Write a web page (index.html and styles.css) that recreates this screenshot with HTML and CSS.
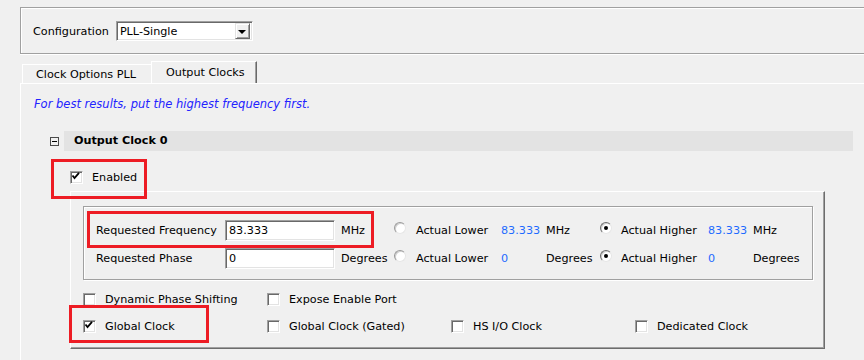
FILE: index.html
```html
<!DOCTYPE html>
<html>
<head>
<meta charset="utf-8">
<link rel="stylesheet" href="styles.css">
</head>
<body>
<div class="config">
  <span class="config-label">Configuration</span>
  <div class="select">
    <span class="select-value">PLL-Single</span>
    <span class="select-btn"><span class="arrow"></span></span>
  </div>
</div>

<div class="tabs">
  <div class="tab">Clock Options PLL</div>
  <div class="tab active">Output Clocks</div>
</div>

<div class="panel">
  <p class="hint">For best results, put the highest frequency first.</p>
  <div class="section">
    <div class="section-head">
      <span class="toggle"></span>
      <div class="section-bar">Output Clock 0</div>
    </div>
    <div class="enabled-row">
      <span class="cb checked"><svg viewBox="0 0 13 13" width="13" height="13"><path d="M2.5 4.5 L4.5 7 L9 1.8" fill="none" stroke="#000" stroke-width="1.8"/></svg></span>
      <span>Enabled</span>
    </div>
    <div class="group">
      <div class="freq-box">
        <span class="lbl">Requested Frequency</span>
        <span class="input">83.333</span>
        <span class="lbl">MHz</span>
        <span class="radio"></span>
        <span class="lbl">Actual Lower</span>
        <span class="val">83.333</span>
        <span class="lbl">MHz</span>
        <span class="radio on"></span>
        <span class="lbl">Actual Higher</span>
        <span class="val">83.333</span>
        <span class="lbl">MHz</span>

        <span class="lbl">Requested Phase</span>
        <span class="input">0</span>
        <span class="lbl">Degrees</span>
        <span class="radio"></span>
        <span class="lbl">Actual Lower</span>
        <span class="val">0</span>
        <span class="lbl">Degrees</span>
        <span class="radio on"></span>
        <span class="lbl">Actual Higher</span>
        <span class="val">0</span>
        <span class="lbl">Degrees</span>
      </div>
      <div class="options">
        <div class="opt"><span class="cb"></span><span>Dynamic Phase Shifting</span></div>
        <div class="opt"><span class="cb"></span><span>Expose Enable Port</span></div>
        <div class="opt"></div>
        <div class="opt"></div>
        <div class="opt"><span class="cb checked"><svg viewBox="0 0 13 13" width="13" height="13"><path d="M2.5 4.5 L4.5 7 L9 1.8" fill="none" stroke="#000" stroke-width="1.8"/></svg></span><span>Global Clock</span></div>
        <div class="opt"><span class="cb"></span><span>Global Clock (Gated)</span></div>
        <div class="opt"><span class="cb"></span><span>HS I/O Clock</span></div>
        <div class="opt"><span class="cb"></span><span>Dedicated Clock</span></div>
      </div>
    </div>
  </div>
</div>

<div class="mark mark-enabled"></div>
<div class="mark mark-freq"></div>
<div class="mark mark-global"></div>
</body>
</html>
```

FILE: styles.css
```css
html, body {
  margin: 0;
  padding: 0;
  overflow: hidden;
}
body {
  background: #f0f0f0;
  font-family: "DejaVu Sans", Verdana, sans-serif;
  font-size: 11.2px;
  color: #000;
  width: 864px;
  height: 360px;
  display: flex;
  flex-direction: column;
}

/* configuration box */
.config {
  margin: 7px -20px 0 20px;
  border: 1px solid #a0a0a0;
  box-shadow: inset 1px 1px 0 #fff, 0 1px 0 #fff;
  padding: 13px 0 12px 12px;
  display: flex;
  align-items: center;
  height: 20px;
  flex: none;
}
.config-label {
  margin-right: 7px;
}
.select {
  width: 137px;
  height: 20px;
  box-sizing: border-box;
  background: #fff;
  border: 1px solid;
  border-color: #a0a0a0 #fff #fff #a0a0a0;
  box-shadow: inset 1px 1px 0 #696969, inset -1px -1px 0 #e3e3e3;
  display: flex;
  align-items: center;
  justify-content: space-between;
  padding: 0 2px 0 3px;
}
.select-btn {
  width: 15px;
  height: 16px;
  box-sizing: border-box;
  background: #f0f0f0;
  border: 1px solid;
  border-color: #e3e3e3 #696969 #696969 #e3e3e3;
  box-shadow: inset 1px 1px 0 #fff, inset -1px -1px 0 #a0a0a0;
  display: flex;
  align-items: center;
  justify-content: center;
}
.arrow {
  width: 0;
  height: 0;
  border-left: 4px solid transparent;
  border-right: 4px solid transparent;
  border-top: 4px solid #000;
  margin-top: 1px;
}

/* tabs */
.tabs {
  display: flex;
  align-items: flex-end;
  margin: 7px 0 0 22px;
  height: 22px;
  flex: none;
}
.tab {
  box-sizing: border-box;
  height: 19px;
  width: 129px;
  border-top: 1px solid #fff;
  border-left: 1px solid #fff;
  padding-left: 13px;
  line-height: 19px;
}
.tab.active {
  height: 22px;
  width: 106px;
  padding-left: 14px;
  line-height: 22px;
  padding-bottom: 2px;
  border-right: 1px solid #696969;
  box-shadow: inset -1px 0 0 #a0a0a0;
}

/* panel */
.panel {
  flex: 1;
  min-height: 0;
  overflow: hidden;
  margin-left: 20px;
  border-top: 1px solid #fff;
  border-left: 1px solid #fff;
}
.hint {
  margin: 13px 0 0 13px;
  line-height: 14px;
  font-style: italic;
  font-size: 11.5px;
  color: #2323ff;
}
.section {
  margin: 20px 0 0 29px;
  width: 803px;
}
.section-head {
  display: flex;
  align-items: center;
  height: 20px;
}
.toggle {
  width: 9px;
  height: 9px;
  box-sizing: border-box;
  border: 1px solid #4a4a4a;
  margin-right: 5px;
  display: flex;
  align-items: center;
  justify-content: center;
}
.toggle::after {
  content: "";
  width: 5px;
  height: 1px;
  background: #000;
}
.section-bar {
  flex: 1;
  height: 20px;
  line-height: 20px;
  background: #e3e3e3;
  padding-left: 10px;
  font-weight: bold;
}

.enabled-row {
  display: flex;
  align-items: center;
  height: 16px;
  margin: 18px 0 0 20px;
  gap: 9px;
}

/* checkbox */
.cb {
  width: 13px;
  height: 13px;
  box-sizing: border-box;
  background: #fff;
  border: 1px solid;
  border-color: #a0a0a0 #fff #fff #a0a0a0;
  box-shadow: inset 1px 1px 0 #696969, inset -1px -1px 0 #e3e3e3;
  position: relative;
  flex: none;
}
.cb svg {
  position: absolute;
  left: -1px;
  top: -1px;
}

/* group box */
.group {
  margin: 6px 0 0 20px;
  width: 755px;
  box-sizing: border-box;
  border-top: 1px solid #fff;
  border-left: 1px solid #fff;
  border-right: 1px solid #6d6d6d;
  border-bottom: 1px solid #6d6d6d;
  box-shadow: inset -1px -1px 0 #a0a0a0;
  padding: 14px 11px 14px 12px;
}
.freq-box {
  border: 1px solid #a0a0a0;
  box-shadow: inset 1px 1px 0 #fff, 1px 1px 0 #fff;
  padding: 13px 0 11px 12px;
  display: grid;
  grid-template-columns: 129px 116px 53px 22px 85px 45px 54px 21px 87px 45px 1fr;
  grid-template-rows: 20px 20px;
  row-gap: 8px;
  align-items: center;
}
.input {
  width: 110px;
  height: 21px;
  box-sizing: border-box;
  background: #fff;
  border: 1px solid;
  border-color: #a0a0a0 #fff #fff #a0a0a0;
  box-shadow: inset 1px 1px 0 #696969, inset -1px -1px 0 #e3e3e3;
  padding-left: 3px;
  line-height: 19px;
}
.val {
  color: #1f6bff;
}
.radio {
  width: 12px;
  height: 12px;
  box-sizing: border-box;
  border-radius: 50%;
  background: #fff;
  border: 1px solid;
  border-color: #9a9a9a #e6e6e6 #e6e6e6 #9a9a9a;
  box-shadow: inset 1px 1px 0 #d0d0d0;
  margin-top: -5px;
  position: relative;
}
.radio.on {
  border-color: #6d6d6d #e6e6e6 #e6e6e6 #6d6d6d;
}
.radio.on::after {
  content: "";
  position: absolute;
  left: 3px;
  top: 3px;
  width: 4px;
  height: 4px;
  border-radius: 50%;
  background: #000;
}

.options {
  margin-top: 11px;
  display: grid;
  grid-template-columns: repeat(4, 184px);
  grid-template-rows: 16px 16px;
  row-gap: 11px;
}
.opt {
  display: flex;
  align-items: center;
  gap: 9px;
}

/* red annotation highlights */
.mark {
  position: absolute;
  box-sizing: border-box;
  border: 3px solid #ed1c24;
}
.mark-enabled {
  left: 51px;
  top: 159px;
  width: 96px;
  height: 40px;
}
.mark-freq {
  left: 87px;
  top: 211px;
  width: 287px;
  height: 37px;
}
.mark-global {
  left: 69px;
  top: 305px;
  width: 140px;
  height: 38px;
}
```
